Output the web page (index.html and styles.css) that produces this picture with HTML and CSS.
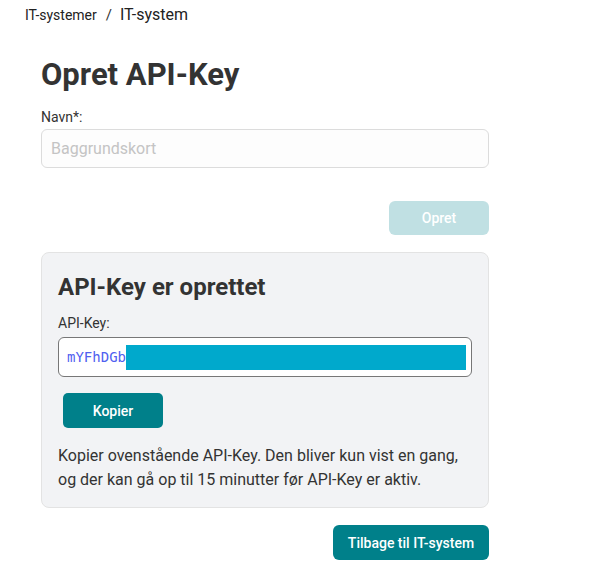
FILE: index.html
```html
<!DOCTYPE html>
<html lang="da">
<head>
<meta charset="utf-8">
<link rel="stylesheet" href="styles.css">
</head>
<body>
<nav class="crumbs"><span class="crumb">IT-systemer</span><span class="sep">/</span><span class="crumb-current">IT-system</span></nav>
<main class="page">
  <h1 class="title">Opret API-Key</h1>
  <label class="label">Navn*:</label>
  <div class="input input-name"><span class="placeholder">Baggrundskort</span></div>
  <div class="row-right"><button class="btn btn-disabled">Opret</button></div>
  <section class="card">
    <h2 class="card-title">API-Key er oprettet</h2>
    <label class="label label-key">API-Key:</label>
    <div class="key-box"><span class="key-text">mYFhDGb</span><span class="key-mask"></span></div>
    <button class="btn btn-copy">Kopier</button>
    <p class="note">Kopier ovenstående API-Key. Den bliver kun vist en gang, og der kan gå op til 15 minutter før API-Key er aktiv.</p>
  </section>
  <div class="row-right"><button class="btn btn-back">Tilbage til IT-system</button></div>
</main>
</body>
</html>
```
FILE: styles.css
```css
* { box-sizing: border-box; }
html, body { margin: 0; padding: 0; background: #fff; }
body { font-family: Roboto, "Noto Sans", sans-serif; color: #333; }
.crumbs { display: flex; align-items: baseline; padding: 5px 0 0 25px; height: 30px; }
.crumb { font-size: 14px; color: #222; }
.sep { font-size: 15px; color: #333; margin: 0 8px 0 9px; }
.crumb-current { font-size: 16px; color: #222; }
.page { width: 448px; margin-left: 41px; display: flex; flex-direction: column; }
.title { font-size: 31px; font-weight: 700; margin: 27px 0 16px; line-height: 36px; color: #333; }
.label { display: block; font-size: 14px; color: #333; line-height: 17px; margin-bottom: 3px; }
.label-key { margin-bottom: 5px; }
.input { height: 39px; border: 1px solid #dcdcdc; border-radius: 6px; background: #fdfdfd; display: flex; align-items: center; padding: 0 9px; }
.placeholder { font-size: 16px; color: #c4c4c4; }
.row-right { display: flex; justify-content: flex-end; }
.btn { border: 0; font-family: Roboto, sans-serif; font-size: 14px; font-weight: 500; color: #fff; border-radius: 6px; height: 34px; padding: 0; cursor: pointer; }
.btn-disabled { background: #c0e0e3; width: 100px; margin-top: 33px; margin-bottom: 17px; }
.card { background: #f2f3f5; border: 1px solid #e3e3e3; border-radius: 8px; padding: 20px 16px 15px 16px; }
.card-title { font-size: 24px; font-weight: 700; margin: 0 0 14px; line-height: 28px; color: #333; }
.key-box { height: 40px; border: 1px solid #777; border-radius: 6px; background: #fff; display: flex; align-items: center; padding: 0 5px 0 8px; margin-bottom: 16px; }
.key-text { font-family: "DejaVu Sans Mono", monospace; font-size: 14px; color: #5060f0; }
.key-mask { flex: 1; height: 25px; background: #00a9cc; }
.btn-copy { background: #00808a; width: 100px; height: 35px; margin-left: 5px; border-radius: 5px; }
.note { font-size: 16px; line-height: 24px; margin: 16px 0 0; color: #333; }
.btn-back { background: #00808a; width: 156px; height: 35px; margin-top: 17px; padding: 0; }
```
